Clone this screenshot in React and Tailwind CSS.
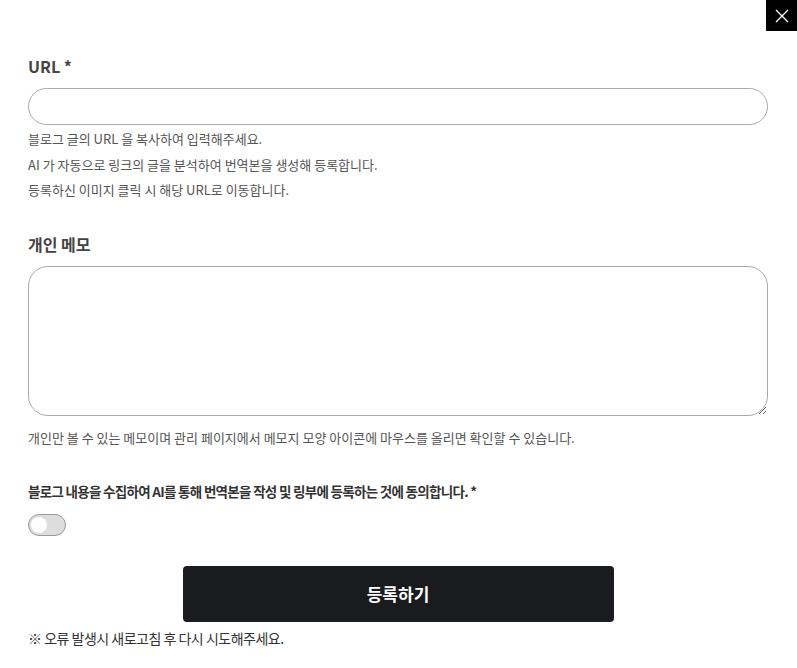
import React, { useState } from "react";

const font = { fontFamily: '"Noto Sans CJK KR", "Noto Sans", sans-serif' };

export default function App() {
    const [agree, setAgree] = useState(false);

    return (
        <div className="relative w-[797px] h-[668px] bg-white overflow-hidden" style={font}>
            {/* Close */}
            <button className="absolute top-0 right-0 w-[31px] h-[31px] bg-black flex items-center justify-center">
                <svg width="14" height="14" viewBox="0 0 14 14" stroke="white" strokeWidth="1.4">
                    <path d="M1 1 L13 13 M13 1 L1 13" />
                </svg>
            </button>

            <div className="px-[28px] pt-[54px] w-[740px] box-content">
                {/* URL */}
                <label className="block text-[16px] font-bold text-[#444] leading-[24px]">URL *</label>
                <input
                    type="text"
                    className="mt-[10px] w-[740px] h-[37px] rounded-full border border-[#aaa] px-4 outline-none"
                />
                <div className="mt-[1px] text-[13px] text-[#555] leading-[25.5px]">
                    <p>블로그 글의 URL 을 복사하여 입력해주세요.</p>
                    <p>AI 가 자동으로 링크의 글을 분석하여 번역본을 생성해 등록합니다.</p>
                    <p>등록하신 이미지 클릭 시 해당 URL로 이동합니다.</p>
                </div>

                {/* Memo */}
                <label className="block mt-[29px] text-[16px] font-bold text-[#444] leading-[24px]">개인 메모</label>
                <textarea className="block mt-[10px] w-[740px] h-[150px] rounded-[20px] border border-[#aaa] p-4 outline-none" />
                <p className="mt-[12px] text-[13px] text-[#555] leading-[20px]">
                    개인만 볼 수 있는 메모이며 관리 페이지에서 메모지 모양 아이콘에 마우스를 올리면 확인할 수 있습니다.
                </p>

                {/* Agreement */}
                <p className="mt-[33px] text-[13.5px] font-bold text-[#333] leading-[20px] tracking-[-0.7px]">
                    블로그 내용을 수집하여 AI를 통해 번역본을 작성 및 링부에 등록하는 것에 동의합니다. *
                </p>
                <button
                    onClick={() => setAgree(!agree)}
                    className={`mt-[13px] w-[38px] h-[22px] rounded-full border border-[#999] flex items-center px-[2px] ${agree ? "bg-[#1a1b1e] justify-end" : "bg-[#ddd] justify-start"}`}
                >
                    <span className="w-[16px] h-[16px] rounded-full bg-white" />
                </button>

                {/* Submit */}
                <div className="flex justify-center mt-[30px]">
                    <button className="w-[431px] h-[56px] bg-[#1a1b1e] rounded-[4px] text-white text-[17px] font-bold">
                        등록하기
                    </button>
                </div>
                <p className="mt-[5px] text-[14px] text-[#333] leading-[22px] tracking-[-0.5px]">※ 오류 발생시 새로고침 후 다시 시도해주세요.</p>
            </div>
        </div>
    );
}
